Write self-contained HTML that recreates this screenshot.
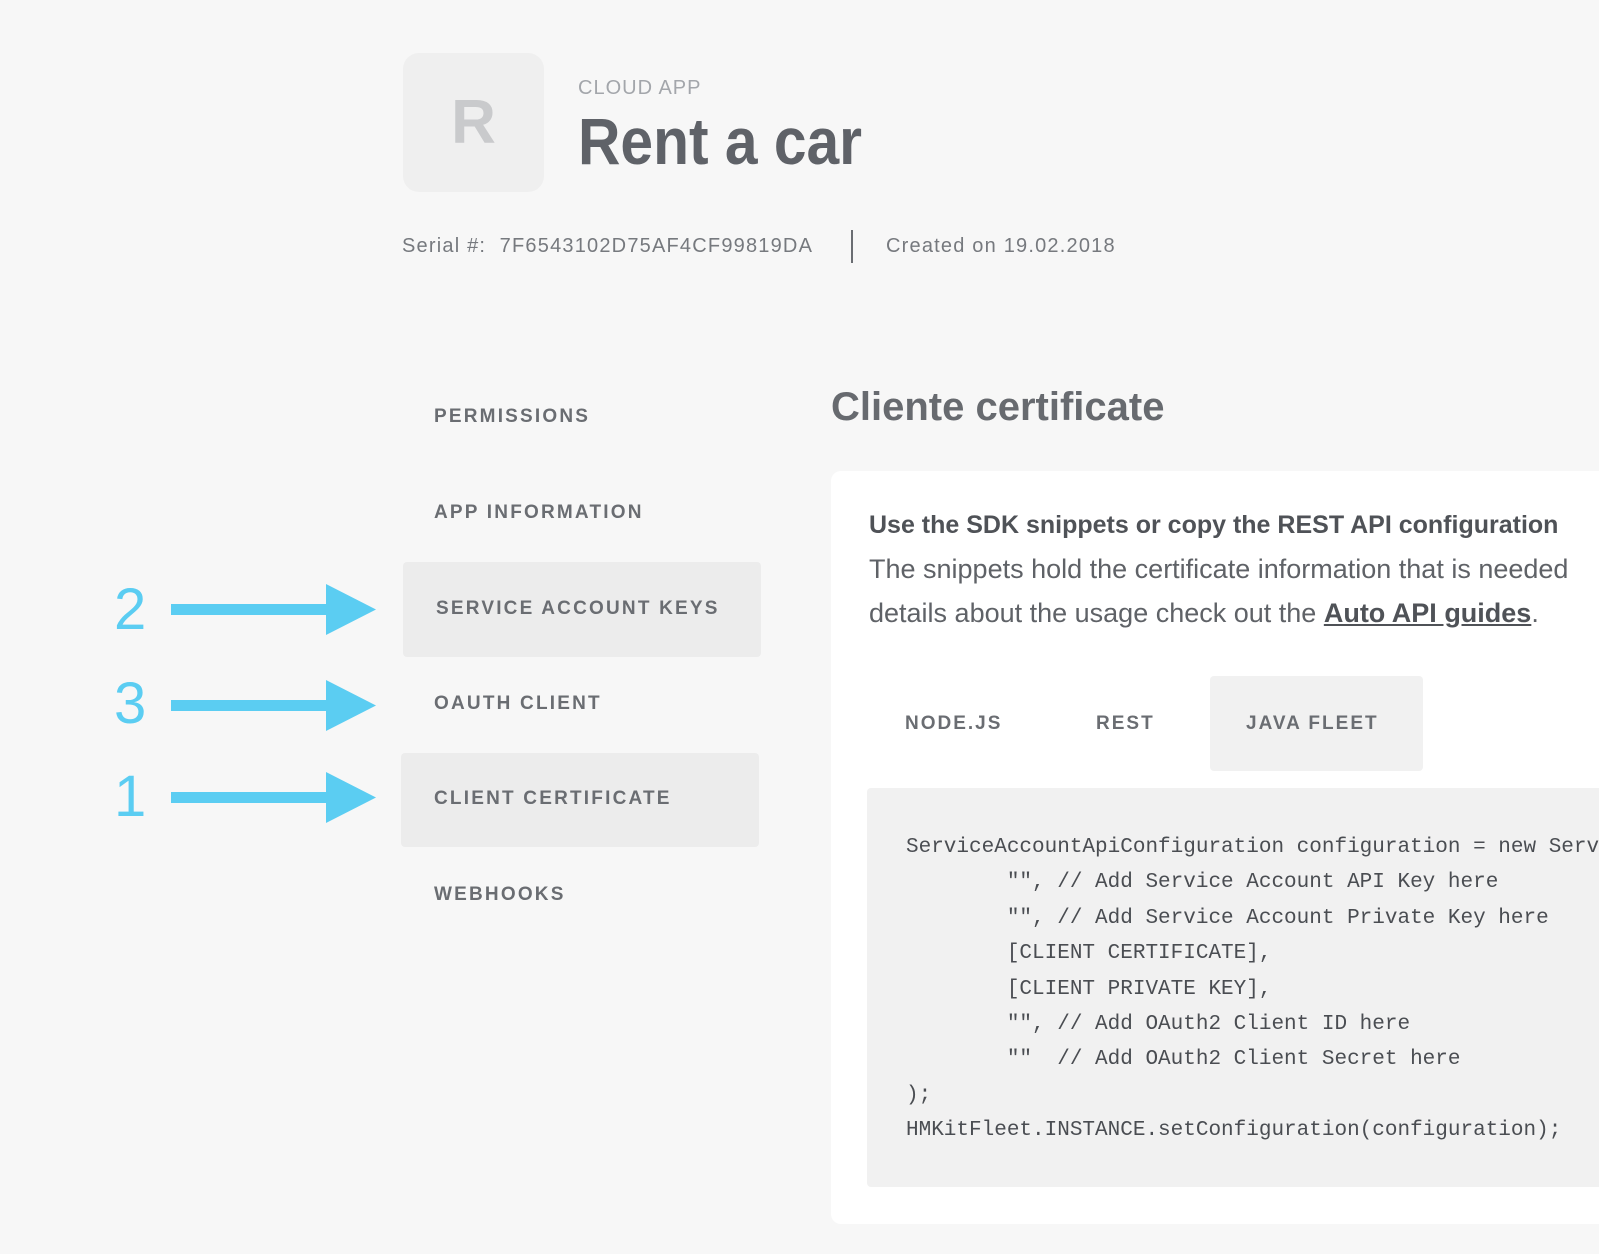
<!DOCTYPE html>
<html><head><meta charset="utf-8"><style>
*{margin:0;padding:0;box-sizing:border-box}
body{width:1599px;height:1254px;background:#f7f7f7;position:relative;overflow:hidden;font-family:"Liberation Sans",Arial,sans-serif;color:#63666b}
.a{position:absolute;white-space:nowrap}
.logo{left:403px;top:53px;width:141px;height:139px;background:#efefef;border-radius:16px}
.logo span{position:absolute;left:0;right:0;top:34px;text-align:center;font-size:62px;font-weight:bold;color:#c9cacc}
.nav{font-size:19px;font-weight:bold;letter-spacing:2.2px;color:#6a6d72;left:434px}
.hl{background:#ececec;border-radius:4px}
.num{font-size:58px;color:#5bcdf2;font-family:"Liberation Sans",sans-serif}
.tab{font-size:19px;font-weight:bold;letter-spacing:2px;color:#6a6d72}
pre.code{font-family:"Liberation Mono",monospace;font-size:21px;line-height:35.4px;color:#4a4d52;white-space:pre}
</style></head><body>
<div class="a logo"><span>R</span></div>
<div class="a" style="left:578px;top:77px;font-size:20px;color:#a3a6ab;letter-spacing:1px">CLOUD APP</div>
<div class="a" style="left:578px;top:103px;font-size:66px;font-weight:bold;color:#5f6268;transform:scaleX(.89);transform-origin:left">Rent a car</div>
<div class="a" style="left:402px;top:235px;font-size:20px;color:#76797e;letter-spacing:1.2px">Serial #:&nbsp; 7F6543102D75AF4CF99819DA</div>
<div class="a" style="left:851px;top:230px;width:2px;height:33px;background:#6a6d72"></div>
<div class="a" style="left:886px;top:235px;font-size:20px;color:#76797e;letter-spacing:1.2px">Created on 19.02.2018</div>

<div class="a nav" style="top:406px">PERMISSIONS</div>
<div class="a nav" style="top:502px">APP INFORMATION</div>
<div class="a hl" style="left:403px;top:562px;width:358px;height:95px"></div>
<div class="a nav" style="top:598px;left:436px">SERVICE ACCOUNT KEYS</div>
<div class="a nav" style="top:693px">OAUTH CLIENT</div>
<div class="a hl" style="left:401px;top:753px;width:358px;height:94px"></div>
<div class="a nav" style="top:788px">CLIENT CERTIFICATE</div>
<div class="a nav" style="top:884px">WEBHOOKS</div>

<div class="a num" style="left:114px;top:576px">2</div>
<div class="a num" style="left:114px;top:670px">3</div>
<div class="a num" style="left:114px;top:763px">1</div>
<svg class="a" style="left:0;top:0" width="400" height="900">
<g fill="#5bcdf2">
<rect x="171" y="604" width="160" height="11"/><polygon points="326,584 376,609.5 326,635"/>
<rect x="171" y="700" width="160" height="11"/><polygon points="326,680 376,705.5 326,731"/>
<rect x="171" y="792" width="160" height="11"/><polygon points="326,772 376,797.5 326,823"/>
</g></svg>

<div class="a" style="left:831px;top:385px;font-size:40px;font-weight:bold;color:#676a6f">Cliente certificate</div>
<div class="a" style="left:831px;top:471px;width:768px;height:753px;background:#fff;border-radius:10px 0 0 10px;overflow:hidden">
<div class="a" style="left:38px;top:40px;font-size:25px;font-weight:bold;color:#4f5257">Use the SDK snippets or copy the REST API configuration</div>
<div class="a" style="left:38px;top:83px;font-size:27px;color:#5f6267">The snippets hold the certificate information that is needed</div>
<div class="a" style="left:38px;top:127px;font-size:27px;color:#5f6267">details about the usage check out the <b style="text-decoration:underline;color:#4f5257">Auto API guides</b>.</div>

<div class="a tab" style="left:74px;top:242px">NODE.JS</div>
<div class="a tab" style="left:265px;top:242px">REST</div>
<div class="a hl" style="left:379px;top:205px;width:213px;height:95px;background:#f1f1f1"></div>
<div class="a tab" style="left:415px;top:242px">JAVA FLEET</div>

<div class="a" style="left:36px;top:317px;width:760px;height:399px;background:#f1f1f1;border-radius:4px;overflow:hidden">
<pre class="code" style="position:absolute;left:39px;top:42px;white-space:pre">ServiceAccountApiConfiguration configuration = new ServiceAccountApi
        "", // Add Service Account API Key here
        "", // Add Service Account Private Key here
        [CLIENT CERTIFICATE],
        [CLIENT PRIVATE KEY],
        "", // Add OAuth2 Client ID here
        ""  // Add OAuth2 Client Secret here
);
HMKitFleet.INSTANCE.setConfiguration(configuration);</pre>
</div>
</div>
</body></html>
